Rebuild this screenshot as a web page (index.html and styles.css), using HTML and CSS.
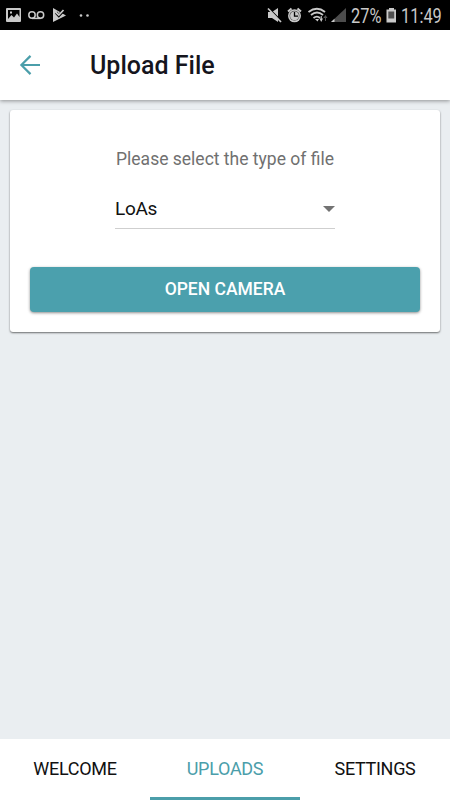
FILE: index.html
```
<!DOCTYPE html>
<html lang="en">
<head>
<meta charset="utf-8">
<title>Upload File</title>
<link rel="stylesheet" href="styles.css">
</head>
<body>
<div class="screen">
  <div class="status">
    <svg class="status-icons" width="96" height="30" viewBox="0 0 96 30" fill="#c9c9c9">
      <path fill-rule="evenodd" d="M7 8H20Q21 8 21 9V21Q21 22 20 22H7Q6 22 6 21V9Q6 8 7 8ZM8 10V19L11.500 15L14 17.500L17 13.500L19.500 17V10ZM10 11.500H12V13.500H10Z"/>
      <g fill="none" stroke="#c9c9c9" stroke-width="1.500"><circle cx="32" cy="15" r="3.200"/><circle cx="40.500" cy="15" r="3.200"/><path d="M32 18.400H40.500"/></g>
      <path d="M53 8L66 15.500L53 22Z"/>
      <path d="M56 12.500L58.800 15.500L64.500 9.500" fill="none" stroke="#000" stroke-width="3"/>
      <path d="M55.500 12L58.800 15L63.500 10" fill="none" stroke="#c9c9c9" stroke-width="1.700"/>
      <circle cx="81" cy="15.500" r="1.300"/><circle cx="87.500" cy="15.500" r="1.300"/>
    </svg>
    <div class="status-right">
      <svg width="82" height="30" viewBox="265 0 82 30" fill="#c9c9c9">
        <path d="M268 12H272L278 8V22L272 18H268Z"/>
        <path d="M268.500 8L282 21.500" stroke="#000" stroke-width="1.500"/>
        <path d="M268 8.500L281 22" stroke="#c9c9c9" stroke-width="1.700"/>
        <circle cx="294.500" cy="15.800" r="6.500"/><circle cx="294.500" cy="15.800" r="5" fill="#555"/><circle cx="294.500" cy="15.800" r="4.400"/>
        <path d="M294.500 12V16.200H298" fill="none" stroke="#000" stroke-width="1.300"/>
        <path d="M288 11.500L291.500 8.500M297.500 8.500L301 11.500" stroke="#c9c9c9" stroke-width="2"/>
        <g fill="none" stroke="#c9c9c9" stroke-width="1.800"><path d="M308.500 12Q317 5.500 325 12M311 15Q317 10 323 15M313.500 18Q317 15.200 320 18"/></g>
        <path d="M315 19H319L317.500 21.500Z"/>
        <path d="M319.500 18.500H323L321.200 22ZM320.700 16H321.800V19H320.700Z"/>
        <path d="M323.300 18L325.500 15L327.500 18H326V21H325V18Z" fill="#555"/>
        <path d="M346 8V22H331Z" fill="#4c4c4c"/><path d="M334.500 18.700V22H331Z"/>
      </svg>
      <span class="percent">27%</span>
      <svg class="battery" width="11" height="30" viewBox="0 0 11 30"><path d="M3 8H8V9.500H10V22.500H.5V9.500H3Z" fill="#c9c9c9"/><path d="M2.300 11.500H8.200V18.500H2.300Z" fill="#4f4f4f"/></svg>
      <span class="clock">11:49</span>
    </div>
  </div>
  <header class="appbar">
    <svg width="22" height="22" viewBox="0 0 22 22" fill="none" stroke="#4b9eaa" stroke-width="2.200"><path d="M21 11H3M11.500 1.900L2.400 11L11.500 20.100"/></svg>
    <h1>Upload File</h1>
  </header>
  <main class="content">
    <section class="card">
      <p class="prompt">Please select the type of file</p>
      <div class="select"><span>LoAs</span><svg width="12" height="6" viewBox="0 0 12 6"><path d="M0 0H12L6 6Z" fill="#737373"/></svg></div>
      <button class="camera">OPEN CAMERA</button>
    </section>
  </main>
  <nav class="tabs">
    <a class="tab">WELCOME</a>
    <a class="tab active">UPLOADS</a>
    <a class="tab">SETTINGS</a>
  </nav>
</div>
</body>
</html>
```
FILE: styles.css
```
* { box-sizing: border-box; }
body { margin: 0; font-family: Roboto, "Liberation Sans", sans-serif; }
.screen { width: 450px; height: 800px; display: flex; flex-direction: column; background: #eaeef1; overflow: hidden; }
.status { height: 30px; flex: none; background: #000; display: flex; justify-content: space-between; color: #c9c9c9; }
.status svg { display: block; flex: none; }
.status-right { display: flex; width: 185px; }
.percent, .clock { font-size: 19.5px; line-height: 33px; transform: scaleX(.84); transform-origin: left; white-space: nowrap; }
.percent { width: 35px; margin-left: 4px; }
.clock { margin-left: 4px; width: 48px; }
.appbar { height: 70px; flex: none; background: #fff; display: flex; align-items: center; padding-left: 19px; box-shadow: 0 1px 4px rgba(0,0,0,.4); z-index: 1; }
.appbar h1 { margin: 0 0 0 49px; padding-top: 2px; font-size: 25px; line-height: 30px; font-weight: 500; color: #15151d; }
.content { flex: 1; padding: 10px; }
.card { height: 222px; background: #fff; border-radius: 3px; padding: 36px 20px 20px; box-shadow: 0 1px 2px rgba(0,0,0,.55); display: flex; flex-direction: column; align-items: center; }
.prompt { margin: 0; font-size: 17.5px; line-height: 26px; color: #707070; white-space: nowrap; }
.select { width: 220px; height: 39px; margin-top: 18px; padding-bottom: 1px; border-bottom: 1px solid #cfcfcf; display: flex; justify-content: space-between; align-items: center; font-size: 19px; letter-spacing: -.3px; color: #111; }
.camera { width: 390px; height: 45px; margin: 38px 0 0; padding: 0; border: 0; border-radius: 4px; background: #4ba0ad; color: #fff; font: 500 17.5px/45px Roboto, sans-serif; box-shadow: 0 1px 3px rgba(0,0,0,.45); }
.tabs { height: 61px; flex: none; display: grid; grid-template: 61px / repeat(3, 1fr); background: #fff; }
.tab { text-align: center; font-size: 18px; line-height: 60px; letter-spacing: -.3px; color: #111; }
.tab.active { height: 61px; color: #4b9eaa; border-bottom: 3px solid #4b9eaa; }
```
